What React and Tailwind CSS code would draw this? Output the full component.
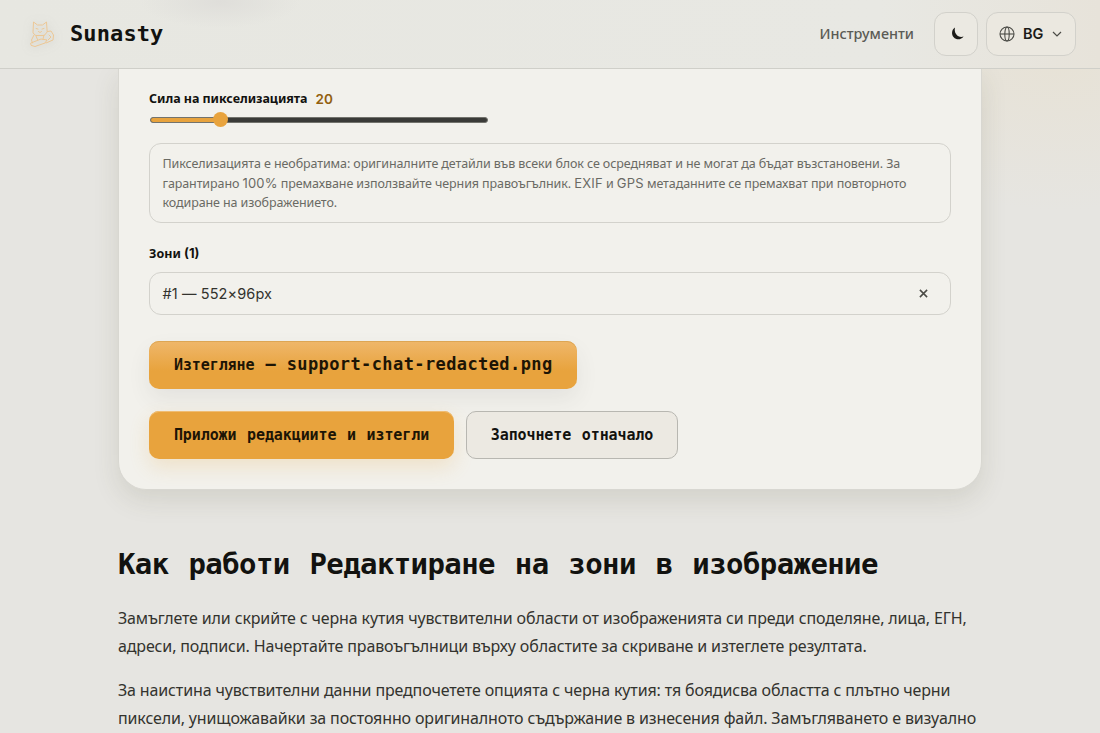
const mono = "font-['DejaVu_Sans_Mono',monospace] font-bold";
const inter = "font-[Inter,sans-serif]";

const Latin = ({ children }) => <span className={`${inter} text-[13px] tracking-[0.2px]`}>{children}</span>;

const note = [
  <>Пикселизацията е необратима: оригиналните детайли във всеки блок се осредняват и не могат да бъдат възстановени. За</>,
  <>гарантирано <Latin>100%</Latin> премахване използвайте черния правоъгълник. <Latin>EXIF</Latin> и <Latin>GPS</Latin> метаданните се премахват при повторното</>,
  <>кодиране на изображението.</>,
];

const paragraphs = [
  [
    'Замъглете или скрийте с черна кутия чувствителни области от изображенията си преди споделяне, лица, ЕГН,',
    'адреси, подписи. Начертайте правоъгълници върху областите за скриване и изтеглете резултата.',
  ],
  [
    'За наистина чувствителни данни предпочетете опцията с черна кутия: тя боядисва областта с плътно черни',
    'пиксели, унищожавайки за постоянно оригиналното съдържание в изнесения файл. Замъгляването е визуално',
  ],
];

function CatLogo() {
  return (
    <svg className="drop-shadow-[0_1px_5px_rgba(120,120,120,0.25)]" width="34" height="34" viewBox="0 0 34 34" fill="none" stroke="#ecc795" strokeWidth="1" strokeLinejoin="round" strokeLinecap="round">
      <path d="M9 15.500L9.500 5l4 3h5l4-3 .7 10-3 3.500h-8z" />
      <path d="M12 11.500l2 .6M20 11.500l-2 .6M14.500 14.500l1.500 1 1.500-1M10 18l-2.500 5 1 3M23.500 14.500l3.500-.5 2.500 4-.5 5-7 3" />
      <path d="M7 26l10-4 6 1-2 3-10 3.500-3.500-1zM12 19l1.500 3.500M20 18l-1 4M25 18l2 2-3 3" />
    </svg>
  );
}

function Header() {
  return (
    <header className="relative z-10 h-[69px] shrink-0 flex items-center justify-between px-6 border-b border-[#cfcfc9] bg-[#e8e8e3] bg-[radial-gradient(ellipse_80px_26px_at_220px_2px,#dfdeda,transparent),linear-gradient(to_right,#e7e7e1,#e8e8e3_80%,#e7e3da)]">
      <div className="flex items-center gap-3">
        <CatLogo />
        <span className={`${mono} text-[22px] tracking-[0.1px] relative -top-px text-[#12120f]`}>Sunasty</span>
      </div>
      <div className="flex items-center">
        <a className="font-['Noto_Sans',sans-serif] font-medium text-[14.400px] text-[#5b5b55] mr-5">Инструменти</a>
        <button className="w-11 h-11 mr-2 flex items-center justify-center rounded-xl border border-[#d2d1cb] bg-[#ebe9e2]">
          <svg className="ml-[3px]" width="16" height="16" viewBox="0 0 16 16" fill="#1b1b18">
            <path d="M5 1.500C1.500 3.800 1.200 8.500 3.700 11.300c2.700 2.900 7.400 2.700 9.900-.8-2.800.9-5.700.2-7.400-2.200C4.700 6.200 4.500 3.600 5 1.500z" />
          </svg>
        </button>
        <button className="w-[90px] h-11 pl-3 pr-[13px] flex items-center rounded-xl border border-[#d2d1cb] bg-[#ebe8e0]">
          <svg width="16" height="16" viewBox="0 0 16 16" fill="none" stroke="#4b4b46" strokeWidth="1.100">
            <circle cx="8" cy="8" r="7" />
            <ellipse cx="8" cy="8" rx="2.200" ry="7" />
            <path d="M1 8h14" />
          </svg>
          <span className={`${inter} font-semibold text-[14.500px] ml-2 text-[#1b1b18]`}>BG</span>
          <svg className="ml-auto" width="10" height="10" viewBox="0 0 10 10" fill="none" stroke="#4b4b46" strokeWidth="1.200">
            <path d="M1 3l4 4 4-4" />
          </svg>
        </button>
      </div>
    </header>
  );
}

function Slider() {
  return (
    <div className="relative w-[338px] ml-px h-4 flex items-center">
      <div className="w-full h-[6px] rounded-full border border-[#73736d] bg-[#3b3b38] overflow-hidden">
        <div className="w-[70px] h-full bg-[#e8a33d]" />
      </div>
      <div className="absolute left-[62.500px] top-0 w-[15px] h-[15px] rounded-full bg-[#e8a33d]" />
    </div>
  );
}

export default function App() {
  return (
    <div className="h-[733px] overflow-hidden flex flex-col font-['Noto_Sans',sans-serif] bg-[#e6e5e1] bg-[radial-gradient(ellipse_260px_150px_at_1060px_60px,#e7e2d6,transparent)]">
      <Header />
      <main className="w-[864px] mx-auto">
        <section className="h-[421px] px-[30px] pt-5 rounded-b-[28px] border border-t-0 border-[#d8d7d1] bg-[#f2f1ec] shadow-[0_10px_26px_rgba(80,80,50,0.13)]">
          <div className="h-5 flex items-center gap-2 font-bold text-[12.500px] text-[#12120f]">
            <span className="whitespace-nowrap tracking-[-0.05px]">Сила на пикселизацията</span>
            <span className={`${inter} font-semibold text-[13.500px] text-[#92600f]`}>20</span>
          </div>
          <div className="mt-[3px]"><Slider /></div>

          <div className="mt-[15px] h-20 px-[12.500px] pt-[10px] rounded-xl border border-[#d3d2cc] text-[12.500px] tracking-[-0.1px] leading-[19.500px] text-[#6a6a64]">
            {note.map((line, i) => <p key={i} className="h-[19.500px] whitespace-nowrap">{line}</p>)}
          </div>

          <p className="mt-5 h-5 leading-5 font-bold text-[12.500px] text-[#12120f]">Зони <span className={`${inter} text-[13px]`}>(1)</span></p>
          <div className="mt-[9px] h-[43px] pl-[12.500px] pr-[22px] flex items-center justify-between rounded-xl border border-[#d3d2cc]">
            <span className={`${inter} text-[14.500px] tracking-[0.1px] text-[#33332e]`}>#1 — 552×96px</span>
            <button>
              <svg width="9" height="9" viewBox="0 0 10 10" stroke="#4b4b46" strokeWidth="1.700"><path d="M1 1l8 8M9 1L1 9" /></svg>
            </button>
          </div>

          <button className={`${mono} mt-[26px] w-[428px] h-12 pl-[25px] flex items-center rounded-[10px] text-[#1d1505] whitespace-pre bg-[linear-gradient(#efb76b,#e8a33d_62%)] shadow-[inset_0_1px_0_#dda654,0_10px_22px_rgba(60,60,60,0.08)]`}>
            <span className="text-[15px] tracking-[-0.1px]">Изтегляне</span>
            <span className="text-[17px] ml-[11px] tracking-[0.4px]">— support-chat-redacted.png</span>
          </button>
          <div className="mt-[22px] flex gap-3">
            <button className={`${mono} w-[305px] h-12 rounded-[10px] text-[15px] tracking-[-0.1px] [word-spacing:1.700px] text-[#1d1505] bg-[#e8a33d] shadow-[inset_0_1px_0_#efbd74,0_8px_20px_rgba(232,163,61,0.20)]`}>
              Приложи редакциите и изтегли
            </button>
            <button className={`${mono} w-[212px] h-12 rounded-[10px] border border-[#b8b7b1] bg-[#ece9e2] text-[15px] tracking-[-0.1px] [word-spacing:1.700px] text-[#12120f]`}>
              Започнете отначало
            </button>
          </div>
        </section>

        <h2 className={`${mono} mt-[54px] h-10 leading-10 text-[29px] tracking-[-0.6px] [word-spacing:3px] text-[#12120f] whitespace-nowrap`}>
          Как работи Редактиране на зони в изображение
        </h2>
        <div className="mt-5 flex flex-col gap-4 text-[16px] tracking-[-0.140px] leading-7 text-[#33332e]">
          {paragraphs.map((lines, i) => (
            <div key={i}>
              {lines.map(l => <p key={l} className="whitespace-nowrap">{l}</p>)}
            </div>
          ))}
        </div>
      </main>
    </div>
  );
}
